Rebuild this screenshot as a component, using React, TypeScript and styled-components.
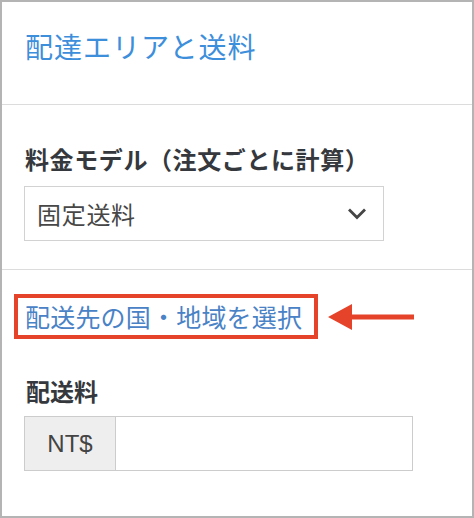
import styled, { createGlobalStyle } from "styled-components";

const GlobalStyle = createGlobalStyle`
  html, body {
    margin: 0;
    padding: 0;
    background: #ffffff;
  }
  * {
    box-sizing: border-box;
  }
`;

const JP = `"Noto Sans CJK JP", "Noto Sans", sans-serif`;

const App = () => {
  return (
    <>
      <GlobalStyle />
      <Panel>
        <Header>
          <Title>配達エリアと送料</Title>
        </Header>
        <Section>
          <FieldLabel>料金モデル（注文ごとに計算）</FieldLabel>
          <Select>
            <SelectValue>固定送料</SelectValue>
            <svg width="20" height="13" viewBox="0 0 20 13">
              <path
                d="M2 2.5 L10 10.5 L18 2.5"
                fill="none"
                stroke="#454545"
                strokeWidth="2.8"
              />
            </svg>
          </Select>
        </Section>
        <LastSection>
          <PickRow>
            <Highlight>
              <PickLink>配送先の国・地域を選択</PickLink>
            </Highlight>
            <svg width="86" height="26" viewBox="0 0 86 26">
              <path d="M0 13 L24 0 L24 10.5 L86 10.5 L86 15.5 L24 15.5 L24 26 Z" fill="#e5432a" />
            </svg>
          </PickRow>
          <FeeLabel>配送料</FeeLabel>
          <InputGroup>
            <Addon>NT$</Addon>
            <FeeInput type="text" />
          </InputGroup>
        </LastSection>
      </Panel>
    </>
  );
};

const Panel = styled.div`
  width: 474px;
  height: 518px;
  border: 2px solid #b4b4b4;
  background: #ffffff;
  font-family: ${JP};
`;

const Header = styled.div`
  height: 103px;
  padding: 30px 22px 0 23px;
  border-bottom: 1px solid #dcdcdc;
`;

const Title = styled.h1`
  margin: 0;
  font-size: 28px;
  line-height: 28px;
  font-weight: 400;
  letter-spacing: 1px;
  color: #3d8edb;
`;

const Section = styled.div`
  height: 165px;
  padding: 42px 22px 0 22px;
  border-bottom: 1px solid #dcdcdc;
`;

const LastSection = styled.div`
  padding: 24px 22px 0 12px;
`;

const FieldLabel = styled.div`
  margin: 0 0 15px 1px;
  font-size: 24px;
  line-height: 24px;
  font-weight: 700;
  letter-spacing: 0.6px;
  color: #35383d;
`;

const Select = styled.div`
  width: 360px;
  height: 55px;
  border: 1px solid #d2d2d2;
  display: flex;
  align-items: center;
  justify-content: space-between;
  padding: 0 16px 0 12px;
`;

const SelectValue = styled.span`
  font-size: 24px;
  line-height: 24px;
  letter-spacing: 0.7px;
  color: #474747;
`;

const PickRow = styled.div`
  display: flex;
  align-items: center;
  gap: 10px;
`;

const Highlight = styled.div`
  border: 4px solid #e5432a;
  padding: 2px 12px 2px 7px;
  height: 45px;
  display: flex;
  align-items: center;
`;

const PickLink = styled.a`
  font-size: 25px;
  line-height: 25px;
  letter-spacing: 0.2px;
  color: #4a82c6;
  text-decoration: none;
  cursor: pointer;
`;

const FeeLabel = styled.div`
  margin: 40px 0 13px 12px;
  font-size: 24px;
  line-height: 24px;
  font-weight: 700;
  color: #35383d;
`;

const InputGroup = styled.div`
  margin-left: 10px;
  width: 389px;
  height: 55px;
  border: 1px solid #cccccc;
  display: flex;
`;

const Addon = styled.div`
  flex: 0 0 91px;
  background: #eeeeee;
  border-right: 1px solid #cccccc;
  display: flex;
  align-items: center;
  justify-content: center;
  font-family: "Liberation Sans", ${JP};
  font-size: 24px;
  color: #444444;
`;

const FeeInput = styled.input`
  flex: 1 1 auto;
  min-width: 0;
  border: none;
  outline: none;
  padding: 0 12px;
  font-family: "Liberation Sans", ${JP};
  font-size: 22px;
  background: #ffffff;
`;

export default App;
